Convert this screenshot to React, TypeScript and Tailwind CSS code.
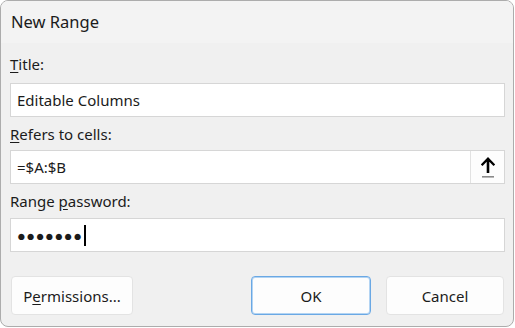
function UpArrow() {
  return (
    <svg width="18" height="24" viewBox="0 0 18 24" className="block">
      <path d="M9 2 L16.2 9.4 L14.5 11.1 L10.3 6.8 V18 H7.7 V6.8 L3.5 11.1 L1.8 9.4 Z" fill="#000" />
      <rect x="3" y="21" width="12" height="1.6" fill="#8a8a8a" />
    </svg>
  );
}

function Field({ children }: { children: React.ReactNode }) {
  return (
    <div className="h-[34px] bg-white border border-[#d6d6d6] flex items-center pl-[6px]">
      {children}
    </div>
  );
}

export default function App() {
  return (
    <div
      className="w-[514px] h-[327px] bg-[#f0f0f0] border border-[#acacac] rounded-[8px] overflow-hidden flex flex-col text-[15px] text-[#1b1b1b] leading-[20px]"
      style={{ fontFamily: '"Noto Sans", "Segoe UI", sans-serif' }}
    >
      <div className="h-[42px] bg-[#f3f3f3] flex items-center pl-[10px] shrink-0 text-[16.5px]">New Range</div>

      <div className="flex flex-col pl-[9px] pr-[8px]">
        <div className="mt-[11px] mb-[9px]">
          <u className="underline-offset-2">T</u>itle:
        </div>
        <Field>Editable Columns</Field>

        <div className="mt-[7px] mb-[6px]">
          <u className="underline-offset-2">R</u>efers to cells:
        </div>
        <div className="h-[34px] bg-white border border-[#d6d6d6] flex items-center pl-[6px]">
          <span className="flex-1">=$A:$B</span>
          <div className="w-[34px] h-[32px] border-l border-[#e2e2e2] bg-[#fdfdfd] flex items-center justify-center">
            <UpArrow />
          </div>
        </div>

        <div className="mt-[7px] mb-[7px]">
          Range <u className="underline-offset-2">p</u>assword:
        </div>
        <Field>
          <span className="tracking-[0.6px] text-[14.5px]">●●●●●●●</span>
          <span className="w-[2px] h-[21px] bg-black ml-[1px]" />
        </Field>

        <div className="mt-[24px] flex items-center pl-[1px] pr-[1px]">
          <button className="w-[122px] h-[39px] bg-[#fdfdfd] border border-[#e3e3e3] rounded-[4px]">
            P<u className="underline-offset-2">e</u>rmissions...
          </button>
          <div className="ml-auto flex gap-[15px]">
            <button className="w-[120px] h-[39px] bg-[#fdfdfd] border border-[#6aa8e4] shadow-[inset_0_0_0_1px_#b3d4f3] rounded-[4px]">OK</button>
            <button className="w-[118px] h-[39px] bg-[#fdfdfd] border border-[#e3e3e3] rounded-[4px]">Cancel</button>
          </div>
        </div>
      </div>
    </div>
  );
}
